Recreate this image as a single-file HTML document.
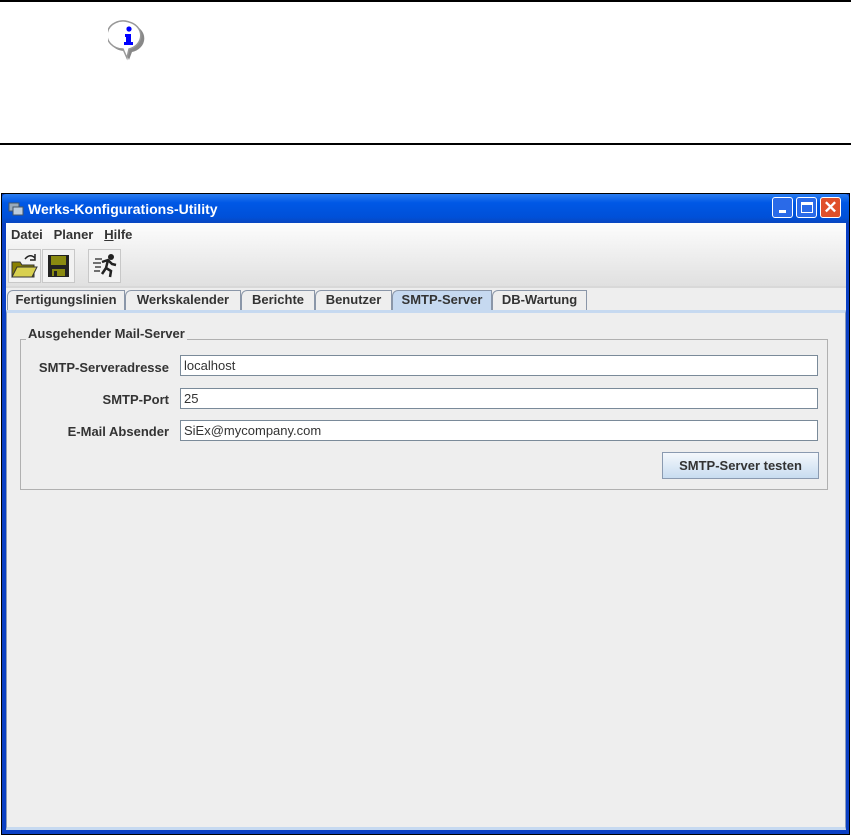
<!DOCTYPE html>
<html><head><meta charset="utf-8"><style>
*{margin:0;padding:0;box-sizing:border-box}
body{width:851px;height:835px;background:#fff;position:relative;overflow:hidden;font-family:"Liberation Sans",sans-serif;font-size:13px;color:#222}
.a{position:absolute}
.b{font-weight:bold}
.tab{position:absolute;top:290px;height:21px;border:1px solid #8a96a8;border-bottom:none;background:#eee;font-weight:bold;color:#333;text-align:center;line-height:18px;border-top-left-radius:6px 6px}
.lbl{position:absolute;right:682px;font-weight:bold;color:#333;text-align:right}
.fld{position:absolute;left:180px;width:638px;height:21px;background:#fff;border:1px solid #7a8a99;padding-left:3px;line-height:19px;color:#333}
.tb{position:absolute;top:249px;width:33px;height:34px;border:1px solid #c8c8c8;background:#f2f2f2}
</style></head><body>
<div class="a" style="left:0;top:0;width:851px;height:2px;background:#000"></div>
<div class="a" style="left:0;top:143px;width:851px;height:2px;background:#000"></div>
<svg class="a" style="left:108px;top:20px" width="46" height="45" viewBox="0 0 46 45">
<path d="M23 3a16 14 0 1 0 -8 26l4 9 3-8a16 14 0 0 0 1-27z" fill="#888" transform="translate(2,2)"/>
<path d="M21 2a16 14 0 1 0 -6 27l4 9 2-9a16 14 0 0 0 0-27z" fill="#fff" stroke="#999" stroke-width="1.5"/>
<circle cx="21" cy="9" r="2.6" fill="#00f"/><path d="M17 14h6v8h2v3h-9v-3h2v-5h-1z" fill="#00f"/>
</svg>
<div class="a" style="left:1px;top:193px;width:849px;height:642px;background:#0a3fc4;border:1px solid #000"></div>
<div class="a" style="left:2px;top:194px;width:847px;height:29px;background:linear-gradient(#2a7cf0,#0058e6 30%,#0050d8 80%,#0846c0);border-radius:4px 4px 0 0"></div>
<svg class="a" style="left:8px;top:201px" width="16" height="16"><rect x="1" y="2" width="10" height="8" fill="#9ab" stroke="#456"/><rect x="5" y="6" width="10" height="8" fill="#bcd" stroke="#456"/></svg>
<div class="a b" style="left:28px;top:201px;color:#fff;font-size:14px">Werks-Konfigurations-Utility</div>
<div class="a" style="left:772px;top:197px;width:21px;height:21px;border:1px solid #fff;border-radius:3px;background:#2a6ae8"><div class="a" style="left:6px;top:12px;width:7px;height:3px;background:#fff"></div></div>
<div class="a" style="left:796px;top:197px;width:21px;height:21px;border:1px solid #fff;border-radius:3px;background:#2a6ae8"><div class="a" style="left:4px;top:4px;width:12px;height:11px;border:1px solid #fff;border-top-width:3px"></div></div>
<div class="a" style="left:820px;top:197px;width:21px;height:21px;border:1px solid #fff;border-radius:3px;background:#e0502a;color:#fff;font-size:17px;line-height:19px;text-align:center;font-weight:bold">✕</div>
<div class="a" style="left:6px;top:223px;width:840px;height:607px;background:#eee"></div>
<div class="a" style="left:6px;top:223px;width:840px;height:63px;background:linear-gradient(#fdfdfd,#e0e0e0)"></div>
<div class="a" style="left:6px;top:286px;width:840px;height:2px;background:#d8d8d8"></div>
<div class="a b" style="left:11px;top:227px;color:#333">Datei&nbsp;&nbsp;&nbsp;Planer&nbsp;&nbsp;&nbsp;<u>H</u>ilfe</div>
<div class="tb" style="left:8px"><svg width="31" height="32"><path d="M3 12h8l2 3h12v12H3z" fill="#8a8000" stroke="#333"/><path d="M3 27l5-10h20l-5 10z" fill="#d8d050" stroke="#333"/><path d="M16 9q5-6 10-1" fill="none" stroke="#222" stroke-width="1.5"/><path d="M26 4v6h-5" fill="none" stroke="#222" stroke-width="1.5"/></svg></div>
<div class="tb" style="left:42px"><svg width="31" height="32"><rect x="5" y="5" width="21" height="22" fill="#222"/><rect x="8" y="6" width="15" height="9" fill="#8a8a10"/><rect x="9" y="19" width="13" height="7" fill="#8a8a10"/><rect x="11" y="21" width="3" height="5" fill="#222"/></svg></div>
<div class="tb" style="left:88px"><svg width="31" height="32"><path d="M6 9h7M4 13h8M6 17h6M5 21h6" stroke="#222" stroke-width="1.2"/><circle cx="22" cy="7" r="3" fill="#222"/><path d="M13 12l6-2 4 4 4 1M19 10l-2 8 5 3-1 6M17 18l-4 6" stroke="#222" stroke-width="2.5" fill="none"/></svg></div>
<div class="tab" style="left:7px;width:118px">Fertigungslinien</div>
<div class="tab" style="left:125px;width:116px">Werkskalender</div>
<div class="tab" style="left:241px;width:74px">Berichte</div>
<div class="tab" style="left:315px;width:77px">Benutzer</div>
<div class="tab" style="left:392px;width:100px;background:#c6d9f0;height:22px">SMTP-Server</div>
<div class="tab" style="left:492px;width:95px">DB-Wartung</div>
<div class="a" style="left:6px;top:310px;width:840px;height:520px;border:1px solid #8a9ab8;border-top:3px solid #c6d9f0;border-bottom:3px solid #c6d9f0"></div>
<div class="a" style="left:20px;top:339px;width:808px;height:151px;border:1px solid #b0b0b0"></div>
<div class="a b" style="left:26px;top:326px;background:#eee;padding:0 2px;color:#333">Ausgehender Mail-Server</div>
<div class="lbl" style="top:360px">SMTP-Serveradresse</div>
<div class="lbl" style="top:392px">SMTP-Port</div>
<div class="lbl" style="top:424px">E-Mail Absender</div>
<div class="fld" style="top:355px">localhost</div>
<div class="fld" style="top:388px">25</div>
<div class="fld" style="top:420px">SiEx@mycompany.com</div>
<div class="a b" style="left:662px;top:452px;width:157px;height:27px;border:1px solid #8a9ab0;background:linear-gradient(#f4f8fc,#c8dcf0);text-align:center;line-height:25px;color:#333">SMTP-Server testen</div>
</body></html>
